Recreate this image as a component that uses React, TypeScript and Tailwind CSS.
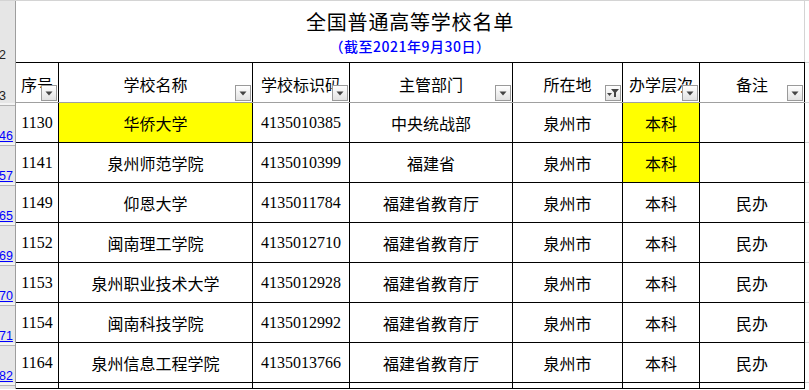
import type { ReactNode } from 'react';

const cols = ['w-[43px]', 'w-[194px]', 'w-[97px]', 'w-[163px]', 'w-[110px]', 'w-[77px]', 'w-[105px]'];

const headers = ['序号', '学校名称', '学校标识码', '主管部门', '所在地', '办学层次', '备注'];

const rows = [
    { n: '46', cells: ['1130', '华侨大学', '4135010385', '中央统战部', '泉州市', '本科', ''], yellow: [1, 5] },
    { n: '57', cells: ['1141', '泉州师范学院', '4135010399', '福建省', '泉州市', '本科', ''], yellow: [5] },
    { n: '65', cells: ['1149', '仰恩大学', '4135011784', '福建省教育厅', '泉州市', '本科', '民办'], yellow: [] },
    { n: '69', cells: ['1152', '闽南理工学院', '4135012710', '福建省教育厅', '泉州市', '本科', '民办'], yellow: [] },
    { n: '70', cells: ['1153', '泉州职业技术大学', '4135012928', '福建省教育厅', '泉州市', '本科', '民办'], yellow: [] },
    { n: '71', cells: ['1154', '闽南科技学院', '4135012992', '福建省教育厅', '泉州市', '本科', '民办'], yellow: [] },
    { n: '82', cells: ['1164', '泉州信息工程学院', '4135013766', '福建省教育厅', '泉州市', '本科', '民办'], yellow: [] },
];

function FilterButton({ active }: { active?: boolean }) {
    return (
        <div className="absolute right-[1px] bottom-[1px] w-[16px] h-[16px] border border-[#9a9a9a] bg-gradient-to-b from-white to-[#e2e2e2] flex items-center justify-center">
            {active ? (
                <svg width="12" height="10" viewBox="0 0 12 10">
                    <path d="M0 5h5l-2.5 3z" fill="#444" />
                    <path d="M4 1h8l-3 3.5V9H7V4.5z" fill="#444" />
                </svg>
            ) : (
                <svg width="8" height="5" viewBox="0 0 8 5">
                    <path d="M0.5 0.5h7L4 4.5z" fill="#444" />
                </svg>
            )}
        </div>
    );
}

function RowHead({ label, blue, doubled }: { label: string; blue?: boolean; doubled?: boolean }) {
    return (
        <div className="w-[16px] shrink-0 bg-[#e6e6e6] border-r border-[#9e9e9e] flex flex-col overflow-hidden">
            {doubled && <div className="h-[3px] border-b border-[#b4b4b4] bg-[#f4f4f4]" />}
            <div className="flex-1 flex items-end pb-[1px]">
                <span
                    className={
                        "font-['Liberation_Sans'] text-[12.5px] leading-none -ml-[1px] " +
                        (blue ? 'text-[#0000ff] underline decoration-[#0000ff] underline-offset-[1px]' : 'text-[#222]')
                    }
                >
                    {label}
                </span>
            </div>
        </div>
    );
}

function Cell({ w, children, yellow }: { w: string; children?: ReactNode; yellow?: boolean }) {
    return (
        <div
            className={
                w +
                ' shrink-0 border-r border-black flex items-center justify-center whitespace-nowrap overflow-hidden ' +
                (yellow ? 'bg-[#ffff00]' : 'bg-white')
            }
        >
            {children}
        </div>
    );
}

export default function App() {
    return (
        <main
            className="w-[809px] h-[390px] overflow-hidden bg-white text-[16px] text-black"
            style={{ fontFamily: '"Liberation Serif", "Noto Sans CJK SC", serif' }}
        >
            {/* title row */}
            <div className="flex h-[62px] border-t border-[#d4d4d4]">
                <RowHead label="2" />
                <div className="w-[789px] shrink-0 border-r border-[#d4d4d4] flex flex-col items-center pt-[6px]">
                    <div className="text-[20px] leading-[29px] tracking-[0.8px] font-['Noto_Sans_CJK_SC']">全国普通高等学校名单</div>
                    <div className="text-[14px] leading-[20px] tracking-[0.5px] text-[#0000ff] font-['Noto_Sans_CJK_SC'] font-medium">
                        （截至2021年9月30日）
                    </div>
                </div>
                <div className="flex-1" />
            </div>

            {/* header row */}
            <div className="flex h-[41px]">
                <RowHead label="3" />
                <div className="flex border-t border-black border-b border-b-[#a0a0a0]">
                    {headers.map((h, i) => (
                        <div key={h} className={cols[i] + ' relative shrink-0 border-r border-black flex items-center justify-center whitespace-nowrap overflow-hidden pt-[2px]'}>
                            <span className="font-['Noto_Sans_CJK_SC']">{h}</span>
                            <FilterButton active={i === 4} />
                        </div>
                    ))}
                </div>
                <div className="flex-1 border-t border-b border-[#d4d4d4]" />
            </div>

            {/* data rows */}
            {rows.map((r) => (
                <div key={r.n} className="flex h-[40px]">
                    <RowHead label={r.n} blue doubled />
                    <div className="flex border-b border-black">
                        {r.cells.map((c, i) => (
                            <Cell key={i} w={cols[i]} yellow={r.yellow.includes(i)}>
                                <span className={i === 0 || i === 2 ? '' : "font-['Noto_Sans_CJK_SC']"}>{c}</span>
                            </Cell>
                        ))}
                    </div>
                    <div className="flex-1 border-b border-[#d4d4d4]" />
                </div>
            ))}

            {/* partial row at the bottom */}
            <div className="flex h-[6px]">
                <RowHead label="" blue doubled />
                <div className="flex border-b border-black">
                    {cols.map((w, i) => (
                        <Cell key={i} w={w} />
                    ))}
                </div>
                <div className="flex-1" />
            </div>
        </main>
    );
}
